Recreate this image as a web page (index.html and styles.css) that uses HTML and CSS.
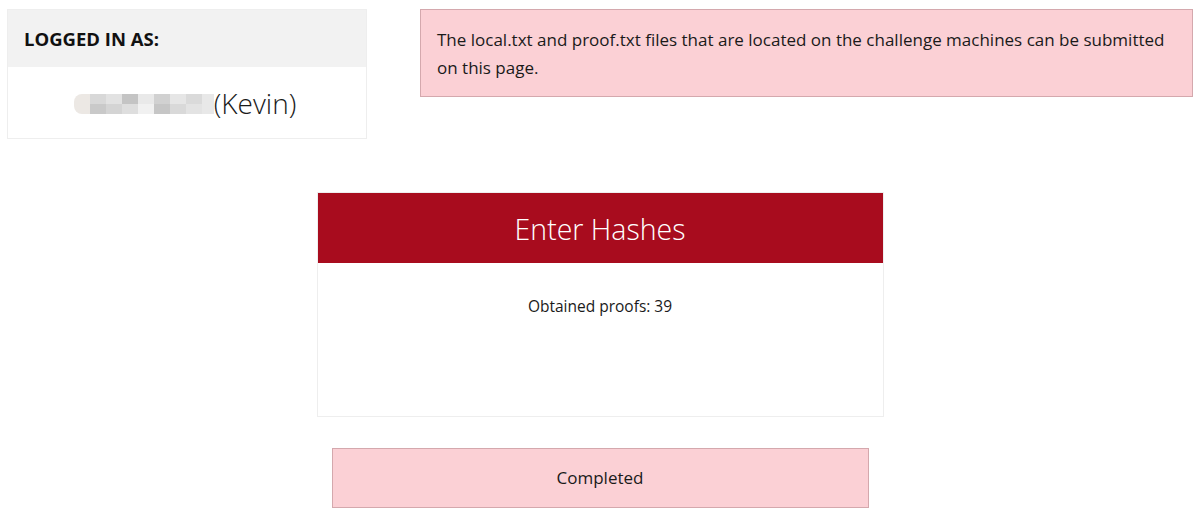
FILE: index.html
```html
<!DOCTYPE html>
<html lang="en">
<head>
    <meta charset="UTF-8">
    <meta name="viewport" content="width=device-width, initial-scale=1.0">
    <title>Proofs</title>
    <link rel="stylesheet" href="styles.css">
</head>
<body>
    <div class="top-row">
        <div class="user-box">
            <div class="user-header">LOGGED IN AS:</div>
            <div class="user-body">
                <span class="blurred" aria-hidden="true">
                    <i></i><i></i><i></i><i></i><i></i><i></i><i></i><i></i><i></i>
                </span><span class="user-name">(Kevin)</span>
            </div>
        </div>
        <div class="alert">
            The local.txt and proof.txt files that are located on the challenge machines can be submitted on this page.
        </div>
    </div>

    <div class="card">
        <div class="card-header">Enter Hashes</div>
        <div class="card-body">
            <p>Obtained proofs: 39</p>
        </div>
    </div>

    <div class="status">Completed</div>
</body>
</html>
```

FILE: styles.css
```css
body {
    margin: 0;
    padding: 9px 7px 0 7px;
    font-family: "Open Sans", "Noto Sans", sans-serif;
    color: #1a1a1a;
    background-color: #fff;
}

.top-row {
    display: flex;
    align-items: flex-start;
    gap: 53px;
}

.user-box {
    width: 358px;
    border: 1px solid #eee;
    flex-shrink: 0;
}

.user-header {
    background-color: #f2f2f2;
    height: 57px;
    padding-left: 16px;
    font-weight: bold;
    font-size: 18.5px;
    line-height: 58px;
    color: #111;
}

.user-body {
    height: 71px;
    display: flex;
    justify-content: center;
    align-items: center;
    padding-right: 4px;
}

.blurred {
    display: inline-flex;
    height: 20px;
    margin-top: 2px;
}

.blurred i {
    width: 16px;
    height: 20px;
}

.blurred i:nth-child(1) { background: #ece8e4; border-radius: 8px 0 0 8px; }
.blurred i:nth-child(2) { background: linear-gradient(180deg, #d8d8d8 50%, #c9c9c9 50%); }
.blurred i:nth-child(3) { background: linear-gradient(180deg, #e2e2e2 50%, #d4d4d4 50%); }
.blurred i:nth-child(4) { background: linear-gradient(180deg, #c4c4c4 50%, #dedede 50%); }
.blurred i:nth-child(5) { background: linear-gradient(180deg, #e9e9e9 50%, #f1f1f1 50%); }
.blurred i:nth-child(6) { background: linear-gradient(180deg, #d1d1d1 50%, #c6c6c6 50%); }
.blurred i:nth-child(7) { background: linear-gradient(180deg, #e6e6e6 50%, #d9d9d9 50%); }
.blurred i:nth-child(8) { background: linear-gradient(180deg, #dadada 50%, #e3e3e3 50%); }
.blurred i:nth-child(9) { background: #e8e8e8; width: 12px; }

.user-name {
    font-weight: 300;
    font-size: 28px;
    color: #1a1a1a;
}

.alert {
    flex: 1;
    background-color: #fbd0d5;
    border: 1px solid #d4a8ad;
    padding: 16px 17px 14px 16px;
    font-size: 17px;
    line-height: 28px;
}

.card {
    width: 565px;
    margin: 53px auto 0 auto;
    border: 1px solid #eee;
}

.card-header {
    background-color: #a80c1e;
    color: #fff;
    text-align: center;
    height: 70px;
    line-height: 72px;
    font-weight: 300;
    font-size: 28.5px;
}

.card-body {
    height: 153px;
    text-align: center;
    font-size: 15.5px;
}

.card-body p {
    margin: 0;
    padding-top: 32px;
}

.status {
    width: 535px;
    margin: 31px auto 0 auto;
    background-color: #fbd0d5;
    border: 1px solid #d4a8ad;
    height: 58px;
    line-height: 58px;
    text-align: center;
    font-size: 17px;
}
```
